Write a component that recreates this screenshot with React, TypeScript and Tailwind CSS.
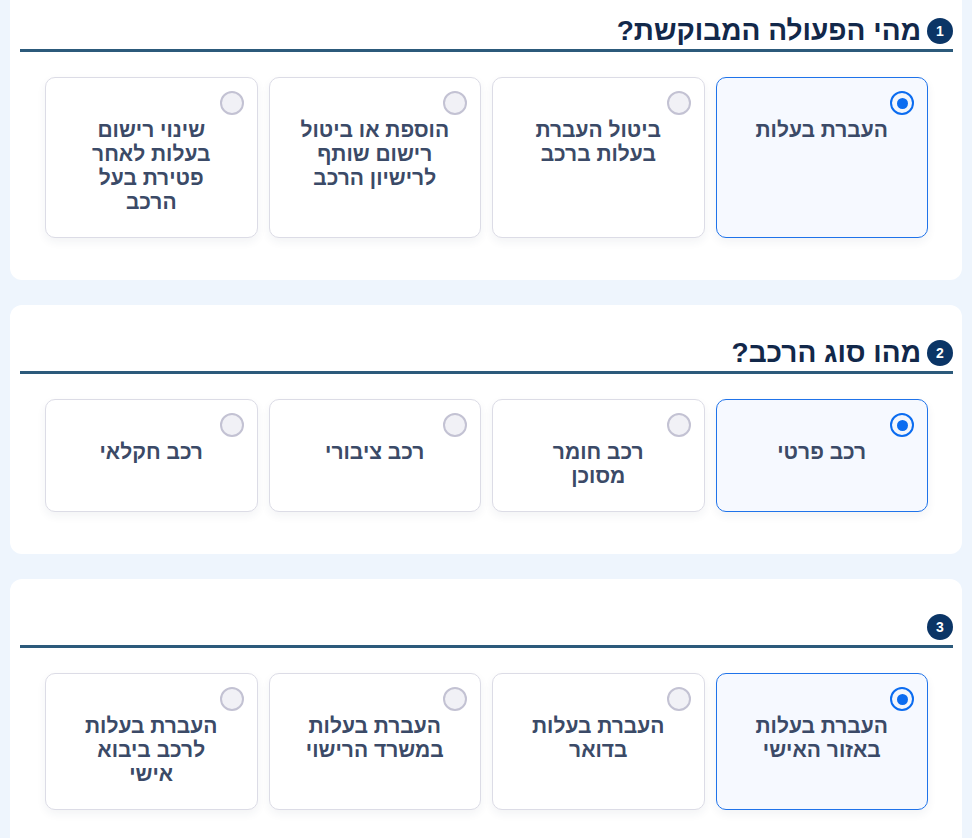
const sections = [
  {
    num: 1,
    title: 'מהי הפעולה המבוקשת?',
    options: [
      'העברת בעלות',
      'ביטול העברת בעלות ברכב',
      'הוספת או ביטול רישום שותף לרישיון הרכב',
      'שינוי רישום בעלות לאחר פטירת בעל הרכב',
    ],
  },
  {
    num: 2,
    title: 'מהו סוג הרכב?',
    options: ['רכב פרטי', 'רכב חומר מסוכן', 'רכב ציבורי', 'רכב חקלאי'],
  },
  {
    num: 3,
    title: '',
    options: [
      'העברת בעלות באזור האישי',
      'העברת בעלות בדואר',
      'העברת בעלות במשרד הרישוי',
      'העברת בעלות לרכב ביבוא אישי',
    ],
  },
];

function Radio({ checked }: { checked: boolean }) {
  return checked ? (
    <span className="absolute top-[13px] right-[13px] w-[24px] h-[24px] rounded-full border-[2.5px] border-[#0b6cf0] bg-[#f3f6fc] flex items-center justify-center">
      <span className="w-[11px] h-[11px] rounded-full bg-[#0b6cf0]" />
    </span>
  ) : (
    <span className="absolute top-[13px] right-[13px] w-[24px] h-[24px] rounded-full border-2 border-[#c3c2d3] bg-[#f1f1f6]" />
  );
}

function Option({ label, checked }: { label: string; checked: boolean }) {
  return (
    <div
      className={
        checked
          ? 'relative rounded-[10px] border border-[#1f73ea] bg-[#f6f9ff] pt-10 pb-[23px] px-[30px] shadow-[0_4px_10px_rgba(30,50,90,0.06)]'
          : 'relative rounded-[10px] border border-[#dcdce6] bg-white pt-10 pb-[23px] px-[30px] shadow-[0_4px_10px_rgba(30,50,90,0.06)]'
      }
    >
      <Radio checked={checked} />
      <p className="text-center text-[21px] leading-[24px] font-bold text-[#3b4a67]">{label}</p>
    </div>
  );
}

export default function App() {
  return (
    <div
      dir="rtl"
      className="min-h-screen bg-[#eef5fd] px-[10px] pb-10 overflow-hidden"
      style={{ fontFamily: '"Liberation Sans", "DejaVu Sans", sans-serif' }}
    >
      <div className="-mt-[17px] flex flex-col gap-[25px]">
        {sections.map((s) => (
          <section key={s.num} className="bg-white rounded-[12px] pt-[30px] pb-[42px] px-[10px]">
            <div className="mr-[-1px]">
              <div className="h-[36px] flex items-center gap-[6px]">
                <span className="w-[26px] h-[26px] rounded-full bg-[#0b3566] text-white text-[14px] font-bold flex items-center justify-center">
                  {s.num}
                </span>
                <h2 className="text-[28px] font-bold text-[#12284a] leading-none">{s.title}</h2>
              </div>
              <div className="h-[3px] bg-[#2c5a7b]" />
            </div>
            <div className="mt-[25px] pr-[24px] pl-[25px] grid grid-cols-4 gap-[11px] items-stretch">
              {s.options.map((o, i) => (
                <Option key={o} label={o} checked={i === 0} />
              ))}
            </div>
          </section>
        ))}
      </div>
    </div>
  );
}
